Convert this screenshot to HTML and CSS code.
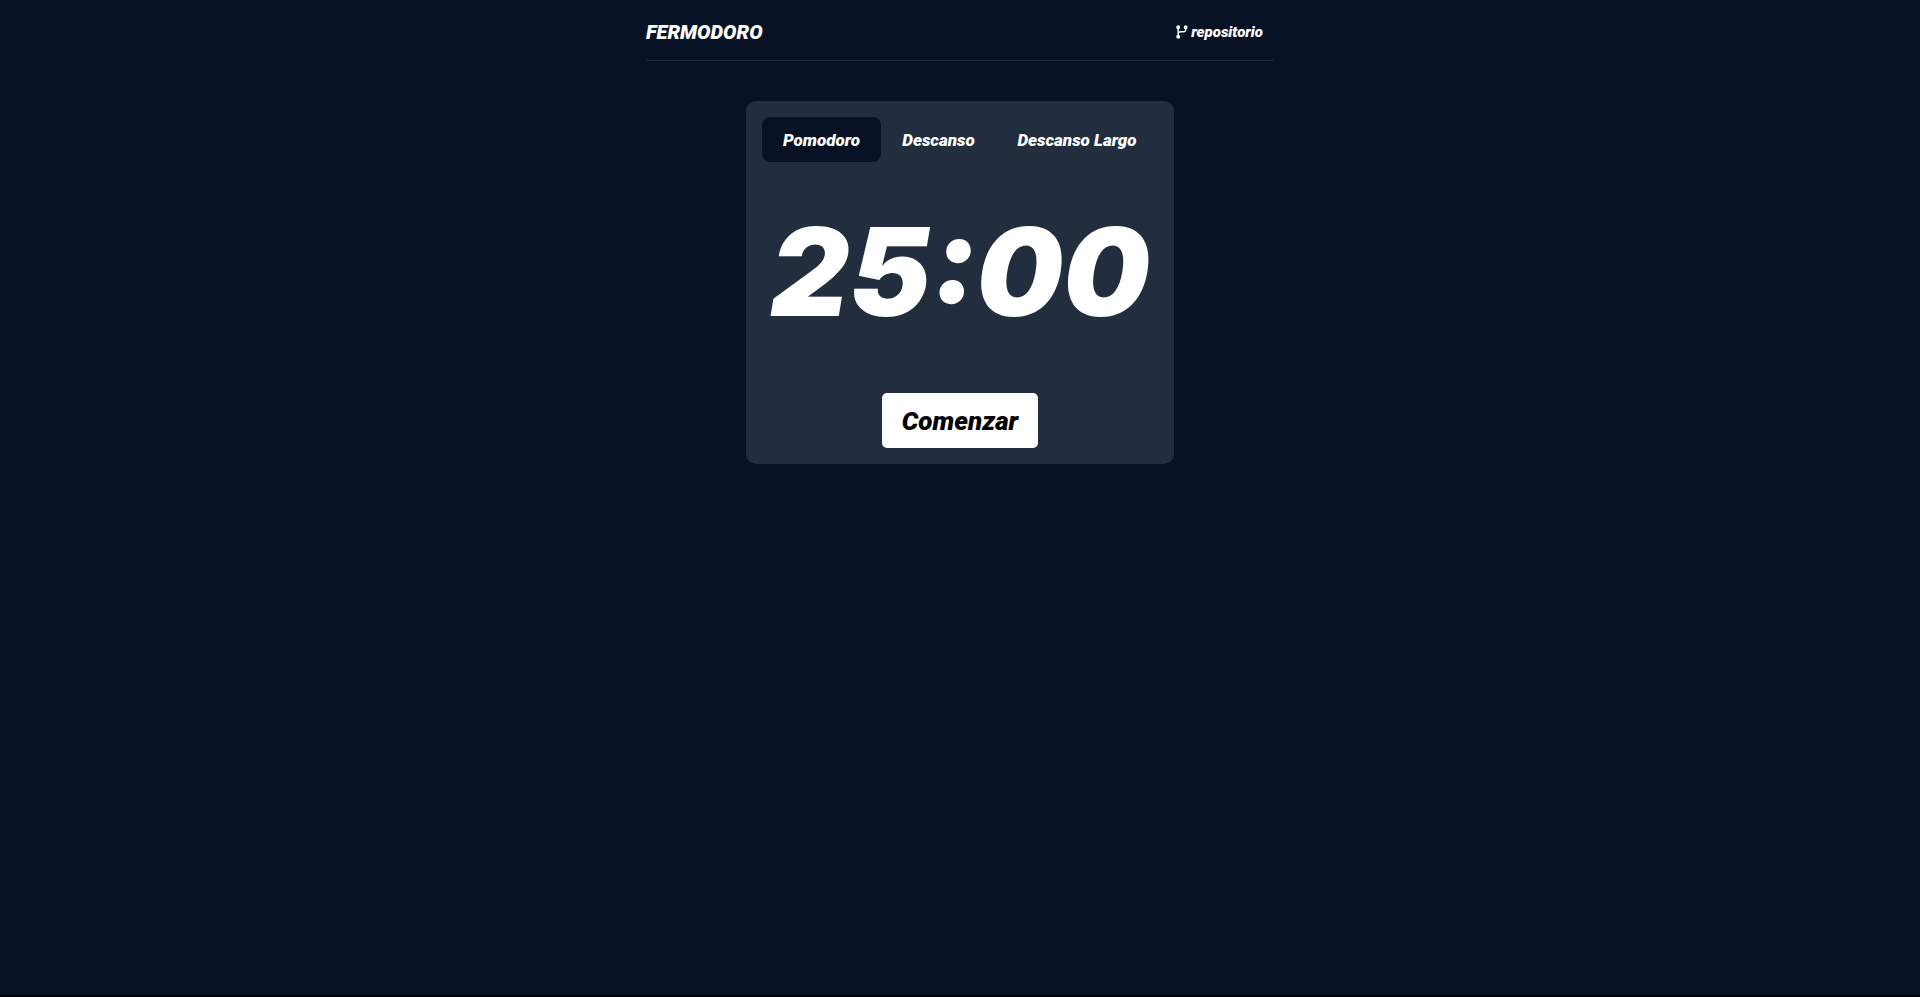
FILE: index.html
```html
<!DOCTYPE html>
<html lang="es">
<head>
<meta charset="utf-8">
<meta name="viewport" content="width=device-width, initial-scale=1">
<title>Fermodoro</title>
<link rel="stylesheet" href="styles.css">
</head>
<body>
<div class="app">
  <header class="header">
    <h1 class="brand">FERMODORO</h1>
    <a class="repo" href="#">
      <svg class="repo-icon" viewBox="0 0 12 14" aria-hidden="true" fill="none" stroke="currentColor" stroke-width="1.5">
        <circle cx="2.2" cy="2.3" r="1.2" fill="currentColor"/>
        <circle cx="2.2" cy="11.7" r="1.2" fill="currentColor"/>
        <circle cx="9.7" cy="2.3" r="1.2" fill="currentColor"/>
        <path d="M2.2 3.5v7M9.7 3.5v1c0 1.5-.8 2.3-2.3 2.3H4.6c-1.4 0-2.4.8-2.4 2"/>
      </svg>
      <span>repositorio</span>
    </a>
  </header>
  <main class="card">
    <nav class="tabs">
      <button class="tab tab-active" type="button">Pomodoro</button>
      <button class="tab" type="button">Descanso</button>
      <button class="tab" type="button">Descanso Largo</button>
    </nav>
    <p class="timer">25:00</p>
    <button class="start" type="button">Comenzar</button>
  </main>
</div>
</body>
</html>
```

FILE: styles.css
```css
* {
  box-sizing: border-box;
}

html {
  background: #000;
}

body {
  margin: 0;
  color: #fff;
  font-family: Roboto, "Liberation Sans", sans-serif;
  font-style: italic;
  font-weight: 900;
}

.app {
  min-height: calc(100vh - 2px);
  padding: 0 16px;
  background: #071224;
}

.header {
  display: flex;
  align-items: center;
  justify-content: space-between;
  max-width: 628px;
  height: 61px;
  margin: 0 auto;
  padding-top: 3px;
  border-bottom: 1px solid #1d2738;
}

.brand {
  margin: 0;
  font-size: 20px;
  font-weight: 900;
}

.repo {
  display: flex;
  align-items: center;
  gap: 3px;
  padding: 8px 11px;
  color: inherit;
  font-size: 15px;
  text-decoration: none;
}

.repo-icon {
  width: 12px;
  height: 14px;
}

.card {
  display: flex;
  flex-direction: column;
  max-width: 428px;
  margin: 40px auto 0;
  padding: 16px;
  border-radius: 10px;
  background: #222d3d;
}

.tabs {
  display: grid;
  grid-template-columns: 119fr 115fr 162fr;
}

.tab {
  height: 45px;
  padding: 0;
  border: 0;
  border-radius: 8px;
  background: transparent;
  color: inherit;
  font: inherit;
  font-size: 17px;
  white-space: nowrap;
}

.tab-active {
  background: #071224;
}

.timer {
  margin: 32px 0 44px;
  font-family: Inter, "Liberation Sans", sans-serif;
  font-size: 122px;
  line-height: 155px;
  text-align: center;
}

.start {
  align-self: center;
  height: 55px;
  padding: 0 20px;
  border: 0;
  border-radius: 5px;
  background: #fff;
  color: #000;
  font: inherit;
  font-size: 26px;
}
```
